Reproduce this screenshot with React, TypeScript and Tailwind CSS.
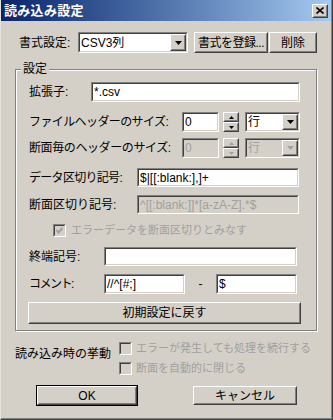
import React from "react";

const FONT = "font-['Liberation_Sans','Noto_Sans_CJK_JP',sans-serif]";

function Sunken({ w, h, bg = "bg-white", children }: { w: string; h: string; bg?: string; children?: React.ReactNode }) {
  return (
    <div className={`${w} ${h} border border-t-[#808080] border-l-[#808080] border-b-white border-r-white`}>
      <div className={`w-full h-full border border-t-[#404040] border-l-[#404040] border-b-[#d4d0c8] border-r-[#d4d0c8] ${bg} flex items-center overflow-hidden`}>
        {children}
      </div>
    </div>
  );
}

function Raised({ className = "", children }: { className?: string; children?: React.ReactNode }) {
  return (
    <div className={`${className} bg-[#d4d0c8] border border-t-white border-l-white border-b-[#404040] border-r-[#404040]`}>
      <div className="w-full h-full border border-t-[#d4d0c8] border-l-[#d4d0c8] border-b-[#808080] border-r-[#808080] flex items-center justify-center">
        {children}
      </div>
    </div>
  );
}

function Arrow({ color = "#000" }: { color?: string }) {
  return (
    <svg width="7" height="4" viewBox="0 0 7 4">
      <polygon points="0,0 7,0 3.5,4" fill={color} />
    </svg>
  );
}

function Field({ w, h, text = "", disabled = false }: { w: string; h: string; text?: string; disabled?: boolean }) {
  return (
    <Sunken w={w} h={h} bg={disabled ? "bg-[#d4d0c8]" : "bg-white"}>
      <span className={`pl-[1px] text-[12px] leading-none whitespace-nowrap ${disabled ? "text-[#a0a0a0]" : "text-black"}`}>{text}</span>
    </Sunken>
  );
}

function Combo({ w, h, text, disabled = false }: { w: string; h: string; text: string; disabled?: boolean }) {
  return (
    <Sunken w={w} h={h} bg={disabled ? "bg-[#d4d0c8]" : "bg-white"}>
      <span className={`flex-1 pl-[1px] text-[12px] leading-none whitespace-nowrap ${disabled ? "text-[#a0a0a0]" : "text-black"}`}>{text}</span>
      <Raised className="w-[16px] h-full">
        <Arrow color={disabled ? "#a0a0a0" : "#000"} />
      </Raised>
    </Sunken>
  );
}

function Spin({ disabled = false }: { disabled?: boolean }) {
  const c = disabled ? "#a0a0a0" : "#000";
  return (
    <div className="ml-[4px] w-[16px] h-[20px] flex flex-col">
      <Raised className="w-full h-[10px]">
        <svg width="5" height="3" viewBox="0 0 5 3"><polygon points="2.5,0 5,3 0,3" fill={c} /></svg>
      </Raised>
      <Raised className="w-full h-[10px]">
        <svg width="5" height="3" viewBox="0 0 5 3"><polygon points="0,0 5,0 2.5,3" fill={c} /></svg>
      </Raised>
    </div>
  );
}

function Check({ checked = false }: { checked?: boolean }) {
  return (
    <Sunken w="w-[13px]" h="h-[13px]" bg="bg-[#d4d0c8]">
      {checked && (
        <svg width="9" height="9" viewBox="0 0 9 9">
          <polyline points="1.5,4 3.5,6.5 7.5,2" fill="none" stroke="#a0a0a0" strokeWidth="2" />
        </svg>
      )}
    </Sunken>
  );
}

export default function App() {
  return (
    <div className={`${FONT} w-[333px] h-[420px] bg-[#d4d0c8] flex flex-col border-l border-l-[#e4e2dc] border-r border-r-[#404040] border-b border-b-[#404040] shadow-[inset_-1px_-1px_0_#808080] text-black`}>
      {/* title bar */}
      <div className="h-[21px] mr-[1px] flex items-center bg-linear-to-r from-[#0a246a] to-[#a6caf0]">
        <span className="pl-[3px] text-[13px] font-bold text-white leading-none tracking-[0.3px]">読み込み設定</span>
        <Raised className="ml-auto mr-[3px] w-[16px] h-[14px]">
          <svg width="8" height="7" viewBox="0 0 8 7">
            <path d="M0.5 0.5 L7.5 6.5 M7.5 0.5 L0.5 6.5" stroke="#000" strokeWidth="1.6" />
          </svg>
        </Raised>
      </div>

      {/* format row */}
      <div className="mt-[11px] ml-[18px] flex items-center h-[21px]">
        <span className="w-[59px] text-[12px] leading-none">書式設定:</span>
        <Combo w="w-[110px]" h="h-[21px]" text="CSV3列" />
        <Raised className="ml-[6px] w-[74px] h-[21px]">
          <span className="text-[12px] leading-none tracking-[-0.5px] whitespace-nowrap">書式を登録...</span>
        </Raised>
        <Raised className="ml-[1px] w-[48px] h-[21px]">
          <span className="text-[12px] leading-none">削除</span>
        </Raised>
      </div>

      {/* settings group */}
      <div className="relative mt-[16px] ml-[14px] w-[302px] h-[262px] border border-[#808080] shadow-[inset_1px_1px_0_#fff,1px_1px_0_#fff] pl-[13px] flex flex-col">
        <span className="absolute -top-[8px] left-[5px] px-[2px] bg-[#d4d0c8] text-[12px] leading-[14px]">設定</span>

        <div className="mt-[12px] flex items-center h-[20px]">
          <span className="w-[62px] text-[12px] leading-none">拡張子:</span>
          <Field w="w-[209px]" h="h-[20px]" text="*.csv" />
        </div>

        <div className="mt-[10px] flex items-center h-[20px]">
          <span className="w-[153px] text-[12px] leading-none tracking-[-0.6px] whitespace-nowrap">ファイルヘッダーのサイズ:</span>
          <Field w="w-[37px]" h="h-[20px]" text="0" />
          <Spin />
          <div className="ml-[6px]">
            <Combo w="w-[55px]" h="h-[20px]" text="行" />
          </div>
        </div>

        <div className="mt-[6px] flex items-center h-[20px]">
          <span className="w-[153px] text-[12px] leading-none tracking-[-0.4px] whitespace-nowrap">断面毎のヘッダーのサイズ:</span>
          <Field w="w-[37px]" h="h-[20px]" text="0" disabled />
          <Spin disabled />
          <div className="ml-[6px]">
            <Combo w="w-[55px]" h="h-[20px]" text="行" disabled />
          </div>
        </div>

        <div className="mt-[10px] flex items-center h-[19px]">
          <span className="w-[108px] text-[12px] leading-none tracking-[-0.7px] whitespace-nowrap">データ区切り記号:</span>
          <Field w="w-[162px]" h="h-[19px]" text="$|[[:blank:],]+" />
        </div>

        <div className="mt-[8px] flex items-center h-[19px]">
          <span className="w-[108px] text-[12px] leading-none whitespace-nowrap">断面区切り記号:</span>
          <Field w="w-[162px]" h="h-[19px]" text="^[[:blank:]]*[a-zA-Z].*$" disabled />
        </div>

        <div className="mt-[10px] ml-[24px] flex items-center h-[13px]">
          <Check checked />
          <span className="ml-[5px] text-[11px] leading-none text-[#a0a0a0] whitespace-nowrap">エラーデータを断面区切りとみなす</span>
        </div>

        <div className="mt-[10px] flex items-center h-[19px]">
          <span className="w-[75px] text-[12px] leading-none">終端記号:</span>
          <Field w="w-[193px]" h="h-[19px]" />
        </div>

        <div className="mt-[8px] flex items-center h-[20px]">
          <span className="w-[75px] text-[12px] leading-none tracking-[-1.5px]">コメント:</span>
          <Field w="w-[81px]" h="h-[20px]" text="//^[#;]" />
          <span className="w-[31px] text-center text-[12px] leading-none">-</span>
          <Field w="w-[81px]" h="h-[20px]" text="$" />
        </div>

        <div className="mt-[8px] -ml-[1px]">
          <Raised className="w-[273px] h-[22px]">
            <span className="text-[12px] leading-none">初期設定に戻す</span>
          </Raised>
        </div>
      </div>

      {/* behaviour on load */}
      <div className="mt-[11px] ml-[14px] flex items-start">
        <span className="mt-[6px] w-[104px] text-[12px] leading-[12px] whitespace-nowrap">読み込み時の挙動</span>
        <div className="flex flex-col gap-[7px]">
          <div className="flex items-center h-[13px]">
            <Check />
            <span className="ml-[4px] text-[11px] leading-none text-[#a0a0a0] whitespace-nowrap">エラーが発生しても処理を続行する</span>
          </div>
          <div className="flex items-center h-[13px]">
            <Check />
            <span className="ml-[4px] text-[11px] leading-none text-[#a0a0a0] whitespace-nowrap">断面を自動的に閉じる</span>
          </div>
        </div>
      </div>

      {/* buttons */}
      <div className="mt-[10px] flex items-start">
        <div className="ml-[35px] w-[102px] h-[21px] border border-black">
          <Raised className="w-full h-full">
            <span className="text-[12px] leading-none">OK</span>
          </Raised>
        </div>
        <Raised className="ml-[55px] mt-[1px] w-[104px] h-[19px]">
          <span className="text-[12px] leading-none">キャンセル</span>
        </Raised>
      </div>
    </div>
  );
}
